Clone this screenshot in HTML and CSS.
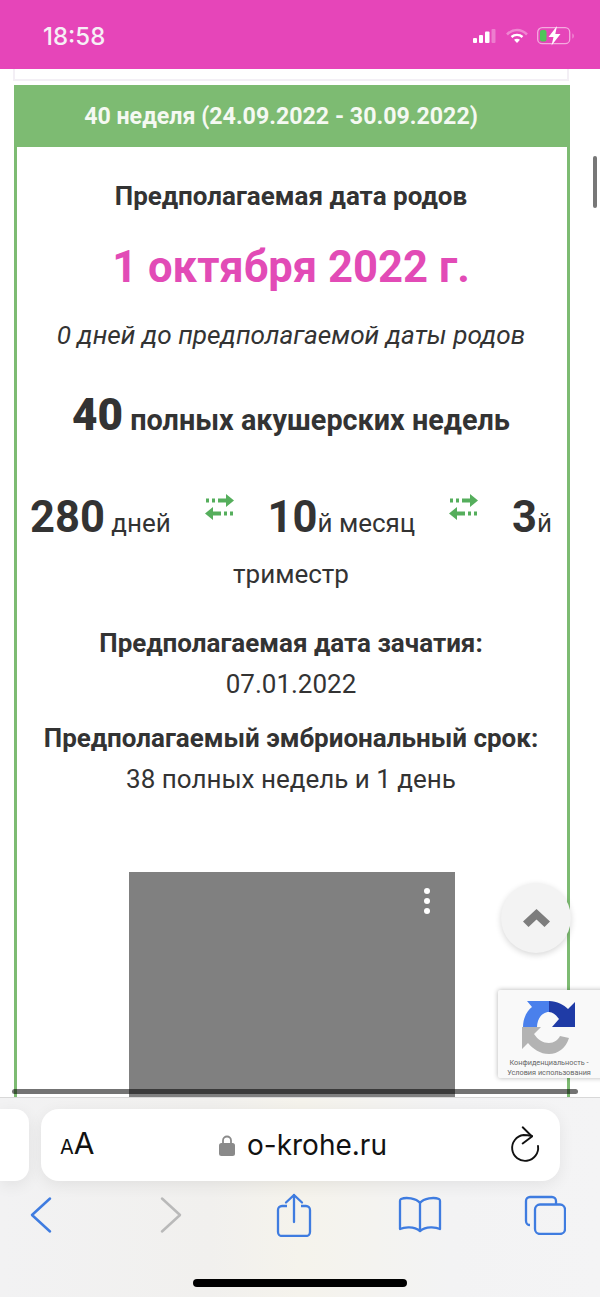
FILE: index.html
```html
<!DOCTYPE html>
<html lang="ru">
<head>
<meta charset="utf-8">
<title>Калькулятор беременности</title>
<link rel="stylesheet" href="styles.css">
</head>
<body>
<div class="phone">
  <header class="status">
    <span class="clock">18:58</span>
    <div class="status-icons">
      <svg class="sig" width="26" height="16" viewBox="0 0 26 16"><rect x="0" y="10" width="4" height="5" rx="1" fill="#fff"/><rect x="6" y="7" width="4" height="8" rx="1" fill="#fff"/><rect x="12" y="3.500" width="4.500" height="11.500" rx="1" fill="#fff"/><rect x="18.500" y="1" width="4" height="14" rx="1" fill="#fff" opacity=".3"/></svg>
      <svg class="wifi" width="24" height="16" viewBox="0 0 24 16"><path d="M2 6.500C8 .5 16 .5 22 6.500" fill="none" stroke="#fff" stroke-opacity=".35" stroke-width="2.600"/><path d="M6.500 9C9.500 6.200 14.500 6.200 17.500 9" fill="none" stroke="#fff" stroke-width="2.400"/><path d="M12 15l-3-3.200c1.800-1.400 4.200-1.400 6 0z" fill="#fff"/></svg>
      <svg class="batt" width="38" height="20" viewBox="0 0 38 20"><rect x=".7" y="1.700" width="32" height="16" rx="4.500" fill="none" stroke="#fff" stroke-opacity=".55" stroke-width="1.300"/><rect x="3" y="4" width="6.500" height="11.500" rx="2" fill="#4fc45a"/><path d="M35.500 7.500c1.500.5 1.500 4.500 0 5z" fill="#fff" fill-opacity=".5"/><path d="M20 0l-8.500 11h5l-2 8.500 9-11.500h-5.200z" fill="#fff"/></svg>
    </div>
  </header>

  <main class="page">
    <div class="prev-card"></div>
    <section class="card">
      <h2 class="card-head">40 неделя (24.09.2022 - 30.09.2022)</h2>
      <div class="card-body">
        <p class="label">Предполагаемая дата родов</p>
        <p class="due">1 октября 2022 г.</p>
        <p class="note">0 дней до предполагаемой даты родов</p>
        <p class="weeks"><b>40</b> полных акушерских недель</p>
        <p class="stats"><span class="s1"><b>280</b> дней</span><svg class="swap" width="29" height="26" viewBox="0 0 29 26"><use href="#swap-arrows"/></svg><span class="s2"><b>10</b>й месяц</span><svg class="swap" width="29" height="26" viewBox="0 0 29 26"><use href="#swap-arrows"/></svg><span class="s3"><b>3</b>й</span></p>
        <p class="tri">триместр</p>
        <p class="label conc">Предполагаемая дата зачатия:</p>
        <p class="val">07.01.2022</p>
        <p class="label emb">Предполагаемый эмбриональный срок:</p>
        <p class="val">38 полных недель и 1 день</p>
        <div class="ad">
          <i class="dot"></i><i class="dot"></i><i class="dot"></i>
        </div>
      </div>
    </section>

    <div class="scroll-v"></div>
    <div class="scroll-h"></div>
    <button class="to-top" aria-label="Наверх">
      <svg width="27" height="18" viewBox="0 0 27 18"><path d="M13.500 0L27 12.500 21.500 18l-8-7.500-8 7.500L0 12.500z" fill="#7d7d7d"/></svg>
    </button>
    <div class="recaptcha">
      <svg width="54" height="54" viewBox="0 0 54 54">
        <path d="M1 27C1 17 6 10 10 7L5 1H27V12C20 12 15 19 15 27z" fill="#4a80ec"/>
        <path d="M27 1C35 1 42 5 46 9L53 2V27H30L37 19C34 15 31 12 27 12z" fill="#1f3ba6"/>
        <path d="M0 27H19L12 34C16 40 21 43 27 43C32 43 36 40 38 36L47 38C44 48 36 54 27 54C18 54 11 49 6 43L0 49z" fill="#b3b3b3"/>
      </svg>
      <span class="rc-text">Конфиденциальность -<br>Условия использования</span>
    </div>
  </main>

  <footer class="browser">
    <div class="url-row">
      <div class="tab-stub"></div>
      <div class="url">
        <span class="aa"><small>A</small>A</span>
        <span class="addr">
          <svg width="16" height="24" viewBox="0 0 16 24"><path d="M4 11V7.500a4 4 0 0 1 8 0V11" fill="none" stroke="#8a8a8a" stroke-width="1.800"/><rect x="0" y="10" width="16" height="13" rx="2.500" fill="#8a8a8a"/></svg>
          <span>o-krohe.ru</span>
        </span>
        <svg width="30" height="38" viewBox="0 0 30 38"><path d="M22 10C19 9.300 16 9 13.500 9A13 13 0 1 0 28 20" fill="none" stroke="#111" stroke-width="1.900" stroke-linecap="round"/><path d="M12.700 1.300L22 10.500l-9.300 7" fill="none" stroke="#111" stroke-width="1.900" stroke-linecap="round" stroke-linejoin="round"/></svg>
      </div>
    </div>
    <nav class="tools">
      <svg width="24" height="38" viewBox="0 0 24 38"><path d="M21 2.500L3 19l18 16.500" fill="none" stroke="#3f7ce0" stroke-width="2.500" stroke-linecap="round" stroke-linejoin="round"/></svg>
      <svg width="24" height="38" viewBox="0 0 24 38"><path d="M3 2.500L21 19 3 35.500" fill="none" stroke="#b9b9b9" stroke-width="2.500" stroke-linecap="round" stroke-linejoin="round"/></svg>
      <svg width="36" height="44" viewBox="0 0 36 44"><path d="M11 13H6a4 4 0 0 0-4 4v22a4 4 0 0 0 4 4h24a4 4 0 0 0 4-4V17a4 4 0 0 0-4-4h-5" fill="none" stroke="#3f7ce0" stroke-width="2.300"/><path d="M18 29V2M10 9.500L18 2l8 7.500" fill="none" stroke="#3f7ce0" stroke-width="2.300" stroke-linecap="round" stroke-linejoin="round"/></svg>
      <svg width="44" height="38" viewBox="0 0 44 38"><path d="M22 7C18 2 8 1 3 3c-1 .5-1 1-1 2v28c4-2 14-3 20 2 6-5 16-4 20-2V5c0-1 0-1.500-1-2-5-2-15-1-19 4zM22 7v28" fill="none" stroke="#3f7ce0" stroke-width="2.300" stroke-linecap="round" stroke-linejoin="round"/></svg>
      <svg width="42" height="40" viewBox="0 0 42 40"><path d="M6 30a4 4 0 0 1-4-4V6a4 4 0 0 1 4-4h22a4 4 0 0 1 4 4v3" fill="none" stroke="#3f7ce0" stroke-width="2.300"/><rect x="11" y="9.500" width="30" height="29.500" rx="5" fill="none" stroke="#3f7ce0" stroke-width="2.300"/></svg>
    </nav>
    <div class="home"></div>
  </footer>
</div>

<svg class="defs" width="0" height="0" aria-hidden="true">
  <symbol id="swap-arrows" viewBox="0 0 29 26">
    <path d="M13 4.500h8V0l8 6.500-8 6.500V8.500h-8z" fill="#55ae5c"/>
    <path d="M16 17.500H8V13l-8 6.500L8 26v-4.500h8z" fill="#55ae5c"/>
    <path d="M1 4.500h3v4H1zM7 4.500h3v4H7zM19 17.500h3v4h-3zM25 17.500h3v4h-3z" fill="#55ae5c"/>
  </symbol>
</svg>
</body>
</html>
```
FILE: styles.css
```css
* { box-sizing: border-box; }
html, body { margin: 0; padding: 0; }
body { width: 600px; height: 1297px; overflow: hidden; font-family: Roboto, "Liberation Sans", sans-serif; color: #333; background: #fff; }
p, h2 { margin: 0; }
.defs { position: absolute; }

.phone { display: flex; flex-direction: column; height: 1297px; }

.status { height: 69px; flex: none; background: #e645b9; display: flex; justify-content: space-between; padding: 22px 25px 0 43px; }
.clock { font-family: Inter, Roboto, sans-serif; font-size: 24px; font-weight: 500; line-height: 30px; color: #f6f0f6; }
.status-icons { display: flex; align-items: flex-start; height: 30px; padding-top: 4px; }
.sig { margin-top: 2px; }
.wifi { margin: 2px 0 0 6px; }
.batt { margin: 0 0 0 8px; }

.page { position: relative; flex: 1; overflow: hidden; background: #fff; }
.prev-card { height: 12px; margin: 0 31px 0 13px; border: 2px solid #f3eff5; border-top: 0; }
.card { margin: 4px 30px 0 14px; border: 3px solid #7dbb72; border-bottom: 0; height: 1100px; }
.card-head { height: 62px; margin: -3px -3px 0; padding-right: 22px; background: #7dbb72; color: #f5f9f2; font-size: 23.200px; font-weight: 700; line-height: 62px; text-align: center; white-space: nowrap; }
.card-body { text-align: center; padding-top: 31px; margin: 0 1px 0 -1px; }
.label { font-size: 26px; font-weight: 700; line-height: 36px; white-space: nowrap; }
.due { font-size: 43.600px; font-weight: 700; line-height: 56px; color: #e24bb6; margin-top: 26px; }
.note { font-size: 26.200px; font-style: italic; line-height: 36px; margin-top: 21px; white-space: nowrap; }
.weeks { font-size: 28.800px; font-weight: 700; line-height: 56px; margin-top: 34px; white-space: nowrap; }
.weeks b { font-size: 44px; }
.stats { display: flex; justify-content: space-between; align-items: flex-start; margin: 40px 14px 0 14px; font-size: 26px; line-height: 60px; height: 60px; white-space: nowrap; }
.stats b { font-size: 43.500px; }
.swap { margin-top: 6px; }
.tri { font-size: 26px; line-height: 36px; margin-top: 8px; }
.conc { margin-top: 33px; }
.val { font-size: 26px; line-height: 36px; margin-top: 5px; }
.emb { margin-top: 18px; }

.ad { width: 326px; height: 226px; margin: 75px 0 0 113px; background: #808080; display: flex; flex-direction: column; align-items: flex-end; gap: 4px; padding: 16px 25px 0 0; }
.dot { width: 6px; height: 6px; border-radius: 50%; background: #fff; }

.scroll-v { position: absolute; right: 3px; top: 87px; width: 4px; height: 52px; border-radius: 2px; background: #777; }
.scroll-h { position: absolute; left: 12px; top: 1020px; width: 566px; height: 5px; border-radius: 2.500px; background: rgba(0,0,0,.55); }
.to-top { position: absolute; left: 501px; top: 814px; width: 70px; height: 70px; padding: 0; border: 0; border-radius: 50%; background: #f3f3f3; box-shadow: 0 2px 6px rgba(0,0,0,.16); display: flex; align-items: center; justify-content: center; }
.recaptcha { position: absolute; left: 498px; top: 921px; width: 110px; height: 88px; padding: 10px 0 0 24px; background: #f9f9f9; box-shadow: 0 0 5px rgba(0,0,0,.3); border-radius: 2px; }
.recaptcha svg { display: block; }
.rc-text { position: absolute; left: 0; top: 68px; width: 102px; text-align: center; font-size: 7.300px; line-height: 10px; color: #666; white-space: nowrap; }

.browser { position: relative; height: 200px; flex: none; background: linear-gradient(90deg, #f2f2f3 0%, #f1f0ee 35%, #f5f3ec 50%, #f3f3f4 75%, #f4f4f5 100%); border-top: 1px solid #d8d8d8; }
.url-row { display: flex; gap: 12px; padding-top: 11px; }
.tab-stub { width: 29px; height: 72px; background: #fff; border-radius: 0 14px 14px 0; box-shadow: 0 4px 16px rgba(0,0,0,.07); }
.url { width: 519px; height: 72px; background: #fff; border-radius: 18px; box-shadow: 0 4px 16px rgba(0,0,0,.07); display: flex; align-items: center; justify-content: space-between; padding: 0 20px 0 19px; position: relative; }
.aa { font-family: Inter, "Liberation Sans", sans-serif; font-size: 30px; line-height: 34px; color: #111; }
.aa small { font-size: 20px; }
.addr { position: absolute; left: 178px; top: 19px; display: flex; align-items: center; gap: 12px; font-family: Inter, "Liberation Sans", sans-serif; font-size: 28px; line-height: 34px; color: #111; }
.tools { display: grid; grid-template-columns: 130px 130px 116px 136px 114px; justify-items: center; align-items: center; margin-left: -24px; height: 68px; }
.home { position: absolute; left: 193px; top: 181px; width: 214px; height: 8px; border-radius: 4px; background: #000; }
```
